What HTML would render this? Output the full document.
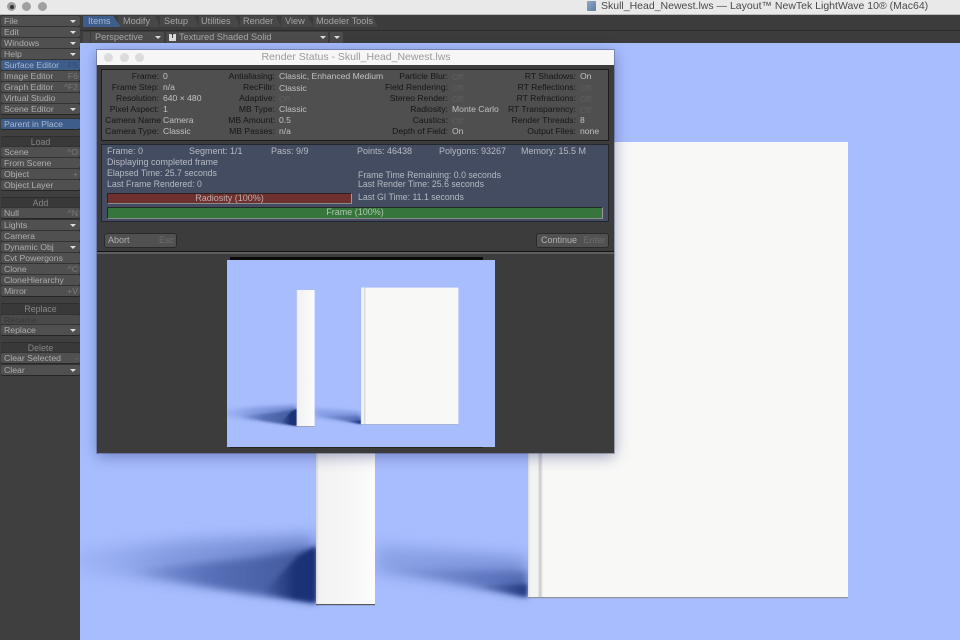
<!DOCTYPE html>
<html><head><meta charset="utf-8"><title>Render Status</title>
<style>
html,body{margin:0;padding:0;width:960px;height:640px;overflow:hidden;background:#a8bdfe}
*{box-sizing:border-box}
body{font-family:"Liberation Sans",sans-serif;font-size:9px;position:relative}
#all div,#all span{position:absolute;white-space:nowrap}
#all{position:absolute;left:0;top:0;width:960px;height:640px;filter:blur(.35px)}
.b{left:1px;width:79px;height:10px;background:#505050;border-radius:2px;color:#aeaeae;line-height:10px;padding-left:3px;box-shadow:0 1px 0 #262626,0 -1px 0 #333;font-size:8.7px}
.h{left:1px;width:79px;height:10px;background:#393939;border-radius:2px;color:#868686;line-height:10px;text-align:center;box-shadow:0 1px 0 #2e2e2e,0 -1px 0 #2e2e2e;font-size:8.8px}
.sel{background:#3f5d8a;color:#a6b8d2}
.k{right:2px;top:0;color:#7a7a7a}
.a{right:4px;top:4px;width:0;height:0;border-left:3.5px solid transparent;border-right:3.5px solid transparent;border-top:3.5px solid #ddd}
.t{top:15px;height:12px;line-height:13px;color:#a4a4a4;font-size:9.2px}
.tb{top:16px;height:11px;background:#474747;clip-path:polygon(0 0,calc(100% - 5px) 0,100% 100%,0 100%)}
.l{color:#161616;text-align:right;line-height:11px;height:11px;font-size:8.6px}
.v{color:#c2c2c2;line-height:11px;height:11px;font-size:8.6px}
.o{color:#5e5e5e;line-height:11px;height:11px;font-size:8.6px}
.w{color:#b6bac4;line-height:11px;height:11px}
.n{font-size:8.75px}
.c1{right:801px}.c2{right:685px}.c3{right:512px}.c4{right:384px}
.x1{left:163px}.x2{left:279px}.x3{left:452px}.x4{left:580px}
</style></head><body>
<div id="all">
<svg width="0" height="0" style="position:absolute">
<defs>
<filter id="f8" x="-30%" y="-60%" width="160%" height="220%"><feGaussianBlur stdDeviation="8"/></filter>
<filter id="f4" x="-30%" y="-60%" width="160%" height="220%"><feGaussianBlur stdDeviation="4"/></filter>
<filter id="f3" x="-30%" y="-60%" width="160%" height="220%"><feGaussianBlur stdDeviation="2.2"/></filter>
<linearGradient id="ls" x1="0" x2="1" y1="0" y2="0"><stop offset="0" stop-color="#8ba1e8" stop-opacity=".25"/><stop offset=".4" stop-color="#7e95dc" stop-opacity=".85"/><stop offset="1" stop-color="#6a82cb"/></linearGradient>
<linearGradient id="lm" x1="0" x2="1" y1="0" y2="0"><stop offset="0" stop-color="#6178c2" stop-opacity="0"/><stop offset=".45" stop-color="#5770b8"/><stop offset="1" stop-color="#3f5699"/></linearGradient>
<linearGradient id="ld" x1="0" x2="1" y1="0" y2="0"><stop offset="0" stop-color="#24387f" stop-opacity="0"/><stop offset=".6" stop-color="#1f3379"/><stop offset="1" stop-color="#1b2e74"/></linearGradient>
<linearGradient id="rs" x1="0" x2="1" y1="0" y2="0"><stop offset="0" stop-color="#8098df" stop-opacity=".7"/><stop offset="1" stop-color="#7288d2" stop-opacity=".9"/></linearGradient>
<linearGradient id="rm" x1="0" x2="1" y1="0" y2="0"><stop offset="0" stop-color="#5f77c0" stop-opacity=".2"/><stop offset="1" stop-color="#5068b0"/></linearGradient>
<linearGradient id="rd" x1="0" x2="1" y1="0" y2="0"><stop offset="0" stop-color="#3f5699" stop-opacity="0"/><stop offset="1" stop-color="#233780"/></linearGradient>
<linearGradient id="sp" x1="0" x2="1" y1="0" y2="0"><stop offset="0" stop-color="#d6d6d6"/><stop offset=".05" stop-color="#f2f2f2"/><stop offset=".6" stop-color="#f7f7f7"/><stop offset="1" stop-color="#fcfcfc"/></linearGradient>
<linearGradient id="bs" x1="0" x2="1" y1="0" y2="0"><stop offset="0" stop-color="#dcdcdc"/><stop offset=".18" stop-color="#f3f3f3"/><stop offset=".65" stop-color="#f3f3f3"/><stop offset=".78" stop-color="#cccccc"/><stop offset=".9" stop-color="#dadada"/><stop offset="1" stop-color="#f8f8f7"/></linearGradient>
<symbol id="scene" viewBox="0 0 960 640" width="960" height="640">
<rect width="960" height="640" fill="#a8bdfe"/>
<polygon points="70,550 200,540 316,536 316,590 200,584 70,572" fill="url(#ls)" filter="url(#f8)"/>
<polygon points="120,572 250,558 316,548 316,603 250,594" fill="url(#lm)" filter="url(#f4)"/>
<polygon points="262,594 298,556 316,546 316,603" fill="url(#ld)" filter="url(#f3)"/>
<polygon points="375,545 527,558 527,590 375,574" fill="url(#rs)" filter="url(#f8)"/>
<polygon points="375,568 527,572 527,597" fill="url(#rm)" filter="url(#f4)"/>
<polygon points="470,586 527,584 527,597" fill="url(#rd)" filter="url(#f3)"/>
<rect x="316" y="150" width="59" height="455" rx="2" fill="url(#sp)"/>
<rect x="316" y="604" width="59" height="1.2" fill="#55595f"/>
<rect x="528" y="142" width="320" height="456" fill="#f8f8f7"/>
<rect x="528" y="142" width="15" height="456" fill="url(#bs)"/>
<rect x="528" y="597" width="320" height="1.2" fill="#8f949a"/>
</symbol>
</defs>
</svg>

<svg style="position:absolute;left:0;top:0" width="960" height="640"><use href="#scene"/></svg>

<!-- top bar -->
<div style="left:0;top:0;width:960px;height:15px;background:#e9e9e9;border-bottom:1px solid #bdbdbd"></div>
<div style="left:7px;top:2px;width:9px;height:9px;border-radius:50%;background:#9c9c9c"></div>
<div style="left:9.5px;top:4.5px;width:4px;height:4px;border-radius:50%;background:#333"></div>
<div style="left:22px;top:2px;width:9px;height:9px;border-radius:50%;background:#a0a0a0"></div>
<div style="left:38px;top:2px;width:9px;height:9px;border-radius:50%;background:#a0a0a0"></div>
<div style="left:587px;top:1px;width:9px;height:10px;background:linear-gradient(135deg,#8fa6c4,#5f7ea8);border-radius:1px"></div>
<div style="left:601px;top:0;line-height:13px;font-size:10.5px;color:#4a4a4a">Skull_Head_Newest.lws — Layout™ NewTek LightWave 10® (Mac64)</div>

<!-- tabs + toolbar -->
<div style="left:80px;top:15px;width:880px;height:28px;background:#3c3c3c"></div>
<div style="left:80px;top:30px;width:880px;height:1px;background:#2b2b2b"></div>
<div class="tb" style="left:118px;width:42px"></div>
<div class="tb" style="left:160px;width:39px"></div>
<div class="tb" style="left:199px;width:41px"></div>
<div class="tb" style="left:240px;width:41px"></div>
<div class="tb" style="left:281px;width:32px"></div>
<div class="tb" style="left:313px;width:65px"></div>
<div style="left:83px;top:16px;width:38px;height:11px;background:#3f5d8a;clip-path:polygon(0 0,80% 0,100% 100%,0 100%)"></div>
<div class="t" style="left:88px;color:#a3b8d6">Items</div>
<div class="t" style="left:123px">Modify</div>
<div class="t" style="left:164px">Setup</div>
<div class="t" style="left:201px">Utilities</div>
<div class="t" style="left:243px">Render</div>
<div class="t" style="left:285px">View</div>
<div class="t" style="left:316px">Modeler Tools</div>
<div style="left:83px;top:32px;width:7px;height:11px;background:#4a4a4a"></div>
<div style="left:91px;top:32px;width:73px;height:11px;background:#4c4c4c;border-radius:1px;color:#a6a6a6;line-height:11px;padding-left:4px;font-size:9.2px">Perspective<span class="a" style="right:3px;top:4px"></span></div>
<div style="left:166px;top:32px;width:162px;height:11px;background:#4c4c4c;border-radius:1px;color:#a6a6a6;line-height:11px;padding-left:13px;font-size:9.2px">Textured Shaded Solid<span class="a" style="right:2px;top:4px"></span></div>
<div style="left:169px;top:34px;width:7px;height:7px;background:#ddd;color:#333;font-size:6px;line-height:7px;text-align:center;font-weight:bold">T</div>
<div style="left:330px;top:32px;width:13px;height:11px;background:#4c4c4c"><span class="a" style="right:3px;top:4px"></span></div>

<!-- sidebar -->
<div style="left:0;top:15px;width:80px;height:625px;background:#3f3f3f"></div>
<div class="b" style="top:16px">File<span class="a"></span></div>
<div class="b" style="top:27px">Edit<span class="a"></span></div>
<div class="b" style="top:38px">Windows<span class="a"></span></div>
<div class="b" style="top:49px">Help<span class="a"></span></div>
<div class="b sel" style="top:60px">Surface Editor<span class="k" style="color:#2f4a75">F5</span></div>
<div class="b" style="top:71px">Image Editor<span class="k">F6</span></div>
<div class="b" style="top:82px">Graph Editor<span class="k">^F2</span></div>
<div class="b" style="top:93px">Virtual Studio</div>
<div class="b" style="top:104px">Scene Editor<span class="a"></span></div>
<div class="b sel" style="top:119px">Parent in Place</div>
<div class="h" style="top:137px">Load</div>
<div class="b" style="top:147px">Scene<span class="k">^O</span></div>
<div class="b" style="top:158px">From Scene</div>
<div class="b" style="top:169px">Object<span class="k">+</span></div>
<div class="b" style="top:180px">Object Layer</div>
<div class="h" style="top:198px">Add</div>
<div class="b" style="top:208px">Null<span class="k">^N</span></div>
<div class="b" style="top:220px">Lights<span class="a"></span></div>
<div class="b" style="top:231px">Camera</div>
<div class="b" style="top:242px">Dynamic Obj<span class="a"></span></div>
<div class="b" style="top:253px">Cvt Powergons</div>
<div class="b" style="top:264px">Clone<span class="k">^C</span></div>
<div class="b" style="top:275px">CloneHierarchy</div>
<div class="b" style="top:286px">Mirror<span class="k">+V</span></div>
<div class="h" style="top:304px">Replace</div>
<div class="b" style="top:315px;color:#383838;background:#4a4a4a">Rename</div>
<div class="b" style="top:325px">Replace<span class="a"></span></div>
<div class="h" style="top:343px">Delete</div>
<div class="b" style="top:353px">Clear Selected<span class="k">-</span></div>
<div class="b" style="top:365px">Clear<span class="a"></span></div>

<!-- window -->
<div style="left:97px;top:50px;width:517px;height:403px;background:#3c3c3c;box-shadow:0 3px 14px rgba(40,50,110,.45),0 0 0 1px rgba(60,60,80,.35)"></div>
<div style="left:97px;top:50px;width:517px;height:15px;background:#f6f6f6"></div>
<div style="left:104px;top:53px;width:9px;height:9px;border-radius:50%;background:#dcdcdc"></div>
<div style="left:120px;top:53px;width:9px;height:9px;border-radius:50%;background:#dcdcdc"></div>
<div style="left:135px;top:53px;width:9px;height:9px;border-radius:50%;background:#dcdcdc"></div>
<div style="left:97px;top:50px;width:517px;text-align:center;line-height:15px;font-size:10.5px;color:#9a9a9a;padding-left:1px">Render Status - Skull_Head_Newest.lws</div>

<div style="left:101px;top:69px;width:508px;height:72px;background:#4f4f4f;border:1px solid #1c1c1c"></div>

<div class="l c1" style="top:71px">Frame:</div><div class="v x1" style="top:71px">0</div>
<div class="l c1" style="top:82px">Frame Step:</div><div class="v x1" style="top:82px">n/a</div>
<div class="l c1" style="top:93px">Resolution:</div><div class="v x1" style="top:93px">640 × 480</div>
<div class="l c1" style="top:104px">Pixel Aspect:</div><div class="v x1" style="top:104px">1</div>
<div class="l" style="top:115px;right:799px">Camera Name</div><div class="v x1" style="top:115px">Camera</div>
<div class="l c1" style="top:126px">Camera Type:</div><div class="v x1" style="top:126px">Classic</div>

<div class="l c2" style="top:71px">Antialiasing:</div><div class="v x2" style="top:71px">Classic, Enhanced Medium</div>
<div class="l c2" style="top:82px">RecFiltr:</div><div class="v x2" style="top:83px">Classic</div>
<div class="l c2" style="top:93px">Adaptive:</div><div class="o x2" style="top:94px">Off</div>
<div class="l c2" style="top:104px">MB Type:</div><div class="v x2" style="top:104px">Classic</div>
<div class="l c2" style="top:115px">MB Amount:</div><div class="v x2" style="top:115px">0.5</div>
<div class="l c2" style="top:126px">MB Passes:</div><div class="v x2" style="top:126px">n/a</div>

<div class="l c3" style="top:71px">Particle Blur:</div><div class="o x3" style="top:72px">Off</div>
<div class="l c3" style="top:82px">Field Rendering:</div><div class="o x3" style="top:83px">Off</div>
<div class="l c3" style="top:93px">Stereo Render:</div><div class="o x3" style="top:94px">Off</div>
<div class="l c3" style="top:104px">Radiosity:</div><div class="v x3" style="top:104px">Monte Carlo</div>
<div class="l c3" style="top:115px">Caustics:</div><div class="o x3" style="top:116px">Off</div>
<div class="l c3" style="top:126px">Depth of Field:</div><div class="v x3" style="top:126px">On</div>

<div class="l c4" style="top:71px">RT Shadows:</div><div class="v x4" style="top:71px">On</div>
<div class="l c4" style="top:82px">RT Reflections:</div><div class="o x4" style="top:83px">Off</div>
<div class="l c4" style="top:93px">RT Refractions:</div><div class="o x4" style="top:94px">Off</div>
<div class="l c4" style="top:104px">RT Transparency:</div><div class="o x4" style="top:105px">Off</div>
<div class="l c4" style="top:115px">Render Threads:</div><div class="v x4" style="top:115px">8</div>
<div class="l c4" style="top:126px">Output Files:</div><div class="v x4" style="top:126px">none</div>

<div style="left:101px;top:144px;width:508px;height:78px;background:#434c60;border:1px solid #23262e"></div>
<div class="w" style="left:107px;top:146px">Frame: 0</div>
<div class="w" style="left:189px;top:146px">Segment: 1/1</div>
<div class="w" style="left:271px;top:146px">Pass: 9/9</div>
<div class="w" style="left:357px;top:146px">Points: 46438</div>
<div class="w" style="left:439px;top:146px">Polygons: 93267</div>
<div class="w" style="left:521px;top:146px">Memory: 15.5 M</div>
<div class="w" style="left:107px;top:157px">Displaying completed frame</div>
<div class="w n" style="left:107px;top:168px">Elapsed Time: 25.7 seconds</div>
<div class="w n" style="left:107px;top:179px">Last Frame Rendered: 0</div>
<div class="w n" style="left:358px;top:170px">Frame Time Remaining: 0.0 seconds</div>
<div class="w n" style="left:358px;top:179px">Last Render Time: 25.6 seconds</div>
<div class="w n" style="left:358px;top:192px">Last GI Time: 11.1 seconds</div>
<div style="left:107px;top:193px;width:245px;height:11px;background:#6f3030;border:1px solid #2a2020;border-right-color:#999;border-bottom-color:#8a8a8a;color:#c0aeae;line-height:9px;text-align:center">Radiosity (100%)</div>
<div style="left:107px;top:207px;width:496px;height:12px;background:#36753b;border:1px solid #232a23;border-right-color:#999;border-bottom-color:#8a8a8a;color:#b0c8b0;line-height:9px;text-align:center">Frame (100%)</div>

<div style="left:104px;top:233px;width:73px;height:15px;background:#515151;border:1px solid #2a2a2a;border-radius:3px;color:#b0b0b0;line-height:13px;padding-left:3px">Abort<span style="right:2px;top:0;color:#6c6c6c">Esc</span></div>
<div style="left:536px;top:233px;width:73px;height:15px;background:#515151;border:1px solid #2a2a2a;border-radius:3px;color:#b0b0b0;line-height:13px;padding-left:4px">Continue<span style="right:3px;top:0;color:#6c6c6c">Enter</span></div>

<div style="left:97px;top:251px;width:517px;height:1px;background:#141414"></div>
<div style="left:97px;top:252px;width:517px;height:2px;background:#5e5e5e"></div>
<div style="left:230px;top:257px;width:253px;height:3px;background:#0a0a0a"></div>
<div style="left:230px;top:447px;width:253px;height:1px;background:#222"></div>

<div style="left:227px;top:260px;width:268px;height:187px;overflow:hidden;background:#a8bdfe">
<svg style="position:absolute;left:0;top:0" width="268" height="187"><g transform="translate(-26.4,-15) scale(.304,.3)"><use href="#scene"/></g></svg>
</div>
</div>
</body></html>
